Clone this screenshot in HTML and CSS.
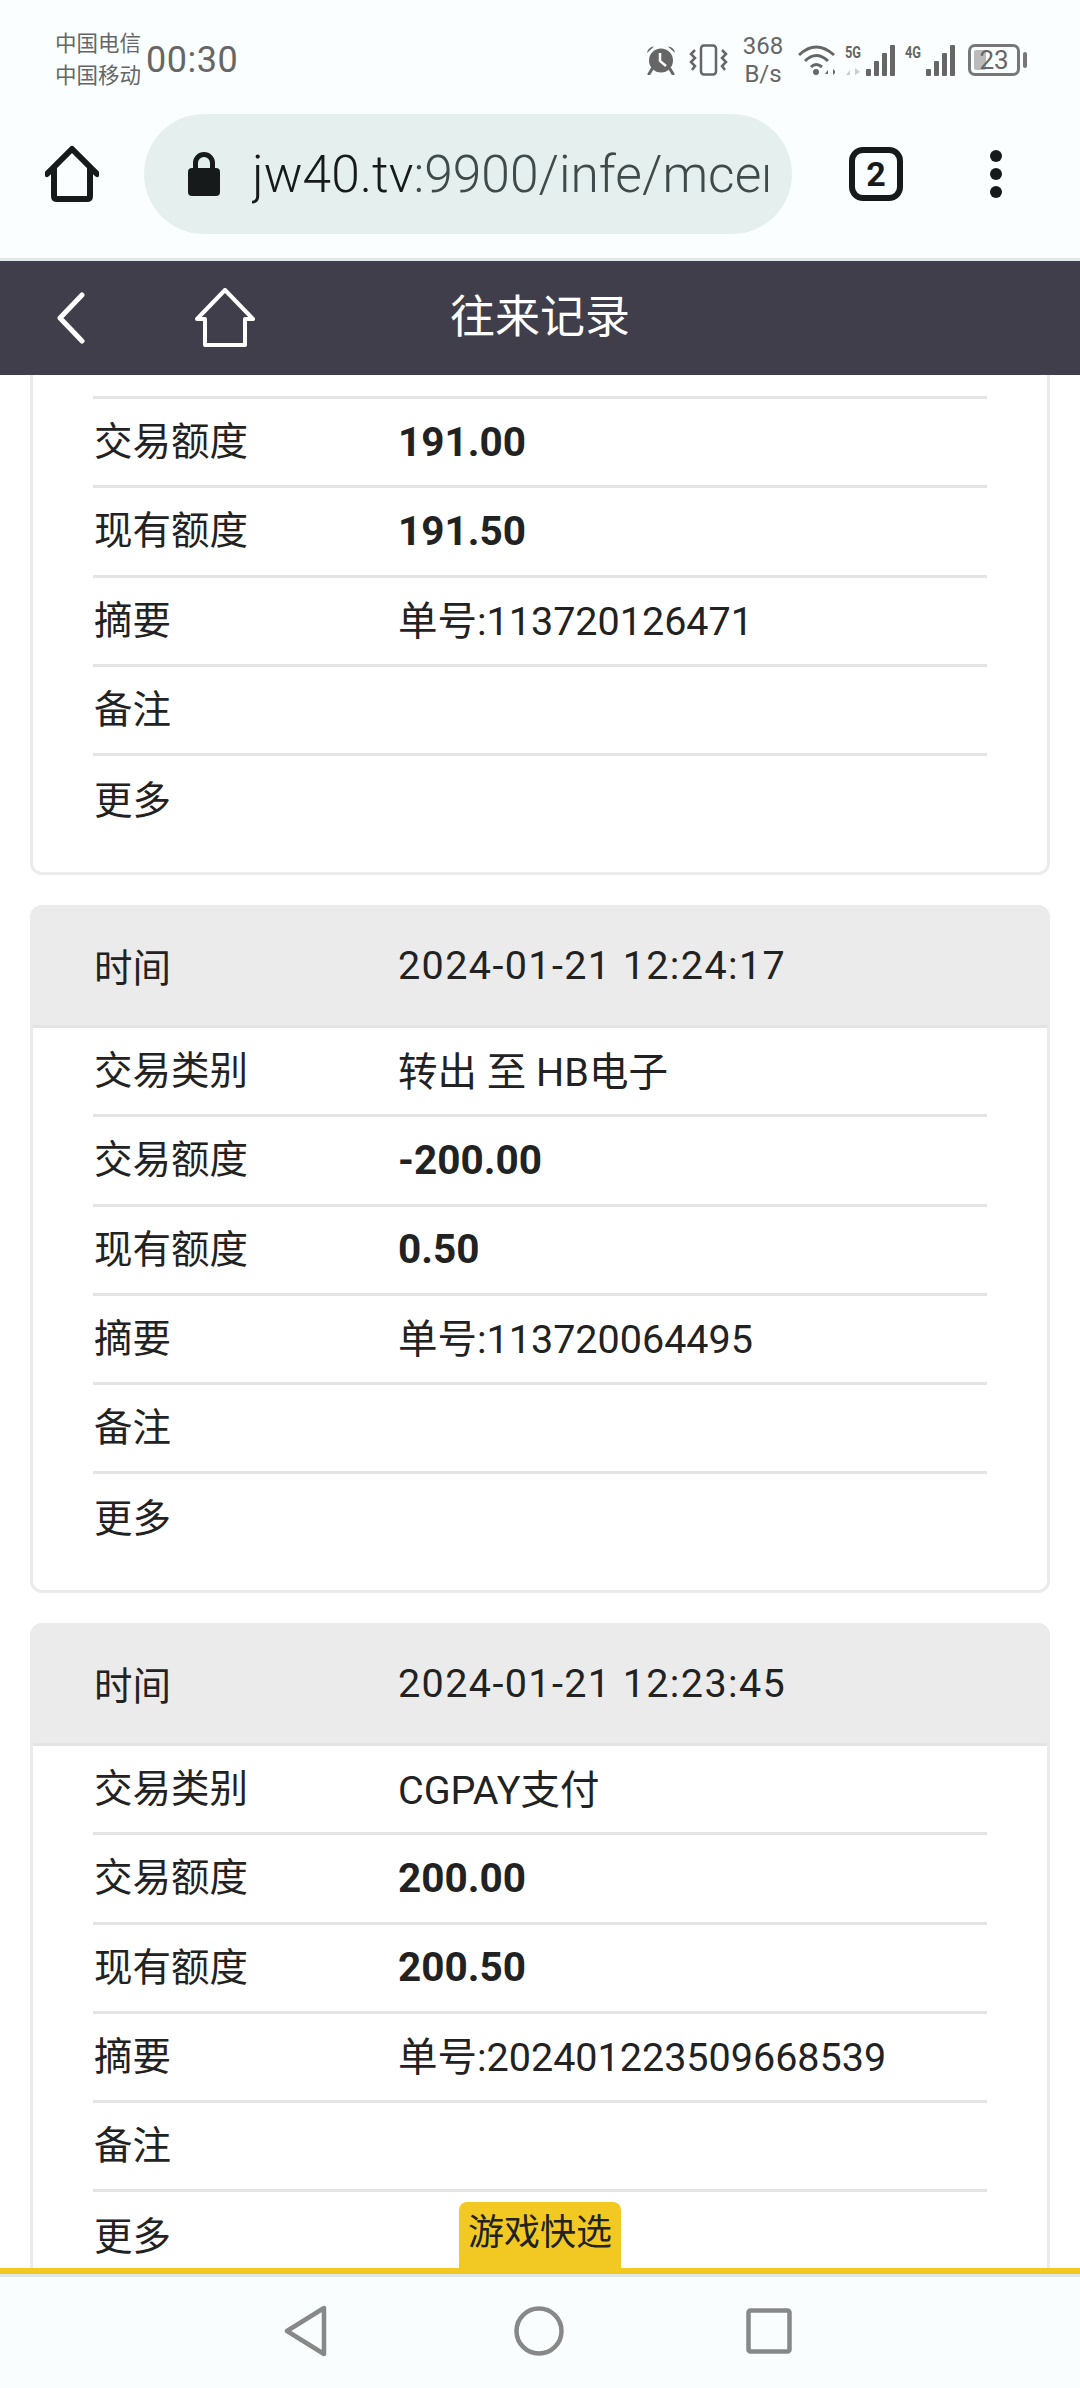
FILE: index.html
```html
<!DOCTYPE html>
<html lang="zh-CN">
<head>
    <meta charset="UTF-8">
    <meta name="viewport" content="width=device-width, initial-scale=1.0">
    <title>往来记录</title>
    <link rel="stylesheet" href="styles.css">
</head>
<body>

<div class="screen">
    <div class="statusBar">
        <div class="carriers"><span>中国电信</span><span>中国移动</span></div>
        <div class="clock">00:30</div>
        <div class="statusIcons">
            <svg class="iconAlarm" width="30" height="30" viewBox="0 0 30 30">
                <circle cx="15" cy="15.5" r="12" fill="#666"/>
                <path d="M1 8 Q2 2 8 1.5 Z M29 8 Q28 2 22 1.5 Z" fill="#666"/>
                <path d="M6 24 L3 29 M24 24 L27 29" stroke="#666" stroke-width="3" stroke-linecap="round"/>
                <path d="M14 8 V16 L20 21" fill="none" stroke="#fafefe" stroke-width="2.5"/>
            </svg>
            <svg class="iconVibrate" width="39" height="32" viewBox="0 0 39 32">
                <rect x="12" y="1.5" width="15" height="29" rx="3" fill="none" stroke="#666" stroke-width="2.5"/>
                <path d="M6 6 L2 10 L6 14 L2 18 L6 22 L3 26 M33 6 L37 10 L33 14 L37 18 L33 22 L36 26" fill="none" stroke="#666" stroke-width="2.5"/>
            </svg>
            <div class="netSpeed"><span>368</span><span>B/s</span></div>
            <svg class="iconWifi" width="37" height="32" viewBox="0 0 37 32">
                <path d="M1 11 Q18 -5 36 11 M7 17 Q18 6 30 17 M13 23 Q18 18 24 23" fill="none" stroke="#666" stroke-width="3"/>
                <circle cx="18" cy="28" r="3" fill="#666"/>
                <path d="M27 30 L30 26 V30 Z M33 24 V31 M35 25 L38 28 L35 31 Z" fill="#666"/>
            </svg>
            <div class="signal">
                <div class="signalTag">
                    <span class="netType">5G</span>
                    <svg width="16" height="10" viewBox="0 0 16 10"><path d="M1 9 L5 4 V9 Z M8 1 V10 M10 2 L15 6 L10 9 Z" fill="#ccc"/></svg>
                </div>
                <div class="bars"><i class="b1"></i><i class="b2"></i><i class="b3"></i><i class="b4"></i></div>
            </div>
            <div class="signal">
                <div class="signalTag"><span class="netType">4G</span></div>
                <div class="bars"><i class="b1"></i><i class="b2"></i><i class="b3"></i><i class="b4"></i></div>
            </div>
            <div class="battery">
                <div class="batteryBody"><div class="batteryFill"></div><span>23</span></div>
                <div class="batteryCap"></div>
            </div>
        </div>
    </div>

    <div class="toolbar">
        <svg class="toolHome" width="54" height="56" viewBox="0 0 54 56">
            <path d="M2 28 L27 3 L52 28 M9 23 V50 Q9 53 12 53 H42 Q45 53 45 50 V23" fill="none" stroke="#161a1a" stroke-width="6" stroke-linecap="round" stroke-linejoin="round"/>
        </svg>
        <div class="urlPill">
            <svg class="lock" width="32" height="44" viewBox="0 0 32 44">
                <path d="M7.5 20 V11 A8.5 8.5 0 0 1 24.5 11 V20" fill="none" stroke="#161a1a" stroke-width="5"/>
                <rect x="0" y="16" width="32" height="28" rx="4" fill="#161a1a"/>
            </svg>
            <div class="url"><span class="urlHost">jw40.tv</span>:9900/infe/mcer</div>
        </div>
        <div class="tabCount">2</div>
        <div class="dots"><i></i><i></i><i></i></div>
    </div>

    <div class="titleBar">
        <svg class="titleBack" width="28" height="52" viewBox="0 0 28 52">
            <path d="M25 3 L3 26 L25 49" fill="none" stroke="#fff" stroke-width="5" stroke-linecap="round" stroke-linejoin="round"/>
        </svg>
        <svg class="titleHome" width="60" height="60" viewBox="0 0 60 60">
            <path d="M2 31 L30 2 L58 31 H50 V57 H10 V31 Z" fill="none" stroke="#fff" stroke-width="4" stroke-linejoin="round"/>
        </svg>
        <div class="titleText">往来记录</div>
    </div>

    <div class="records">
        <div class="card cardCut">
            <div class="row rowCut"></div>
            <div class="row"><div class="label">交易额度</div><div class="value strong">191.00</div></div>
            <div class="row"><div class="label">现有额度</div><div class="value strong">191.50</div></div>
            <div class="row"><div class="label">摘要</div><div class="value">单号:113720126471</div></div>
            <div class="row"><div class="label">备注</div><div class="value"></div></div>
            <div class="row"><div class="label">更多</div><div class="value"></div></div>
        </div>

        <div class="card">
            <div class="cardHead"><div class="label">时间</div><div class="value date">2024-01-21 12:24:17</div></div>
            <div class="row"><div class="label">交易类别</div><div class="value">转出 至 HB电子</div></div>
            <div class="row"><div class="label">交易额度</div><div class="value strong">-200.00</div></div>
            <div class="row"><div class="label">现有额度</div><div class="value strong">0.50</div></div>
            <div class="row"><div class="label">摘要</div><div class="value">单号:113720064495</div></div>
            <div class="row"><div class="label">备注</div><div class="value"></div></div>
            <div class="row"><div class="label">更多</div><div class="value"></div></div>
        </div>

        <div class="card">
            <div class="cardHead"><div class="label">时间</div><div class="value date">2024-01-21 12:23:45</div></div>
            <div class="row"><div class="label">交易类别</div><div class="value">CGPAY支付</div></div>
            <div class="row"><div class="label">交易额度</div><div class="value strong">200.00</div></div>
            <div class="row"><div class="label">现有额度</div><div class="value strong">200.50</div></div>
            <div class="row"><div class="label">摘要</div><div class="value">单号:202401223509668539</div></div>
            <div class="row"><div class="label">备注</div><div class="value"></div></div>
            <div class="row"><div class="label">更多</div><div class="value"></div></div>
        </div>
    </div>

    <div class="footer">
        <div class="quickTab">游戏快选</div>
        <div class="navBar">
            <svg width="44" height="52" viewBox="0 0 44 52">
                <path d="M40 3 V49 L3 26 Z" fill="none" stroke="#888" stroke-width="4.5" stroke-linejoin="round"/>
            </svg>
            <svg width="50" height="50" viewBox="0 0 50 50">
                <circle cx="25" cy="25" r="22.5" fill="none" stroke="#888" stroke-width="4.5"/>
            </svg>
            <svg class="navSquare" width="46" height="46" viewBox="0 0 46 46">
                <rect x="2.5" y="2.5" width="41" height="41" rx="2" fill="none" stroke="#888" stroke-width="4.5"/>
            </svg>
        </div>
    </div>
</div>

</body>
</html>
```

FILE: styles.css
```css
* {
    box-sizing: border-box;
}
body {
    margin: 0;
    font-family: Roboto, "Noto Sans CJK SC", sans-serif;
    background: #fff;
    color: #222;
}
.screen {
    width: 1080px;
    height: 2388px;
    display: flex;
    flex-direction: column;
    overflow: hidden;
}

/* status bar */
.statusBar {
    height: 90px;
    flex: none;
    display: flex;
    align-items: center;
    padding: 30px 53px 0 55px;
    background: #fafefe;
    color: #666;
}
.carriers {
    display: flex;
    flex-direction: column;
    font-size: 21.5px;
    line-height: 32px;
}
.clock {
    margin-left: 5px;
    font-size: 36px;
    letter-spacing: 0.5px;
}
.statusIcons {
    margin-left: auto;
    display: flex;
    align-items: center;
}
.iconVibrate {
    margin-left: 13px;
}
.netSpeed {
    margin-left: 15px;
    width: 40px;
    display: flex;
    flex-direction: column;
    align-items: center;
    font-size: 24px;
    line-height: 28px;
    white-space: nowrap;
}
.iconWifi {
    margin-left: 15px;
}
.signal {
    margin-left: 10px;
    display: flex;
    align-items: flex-end;
    height: 32px;
}
.signalTag {
    display: flex;
    flex-direction: column;
    align-self: flex-start;
    width: 20px;
}
.netType {
    font-size: 16px;
    line-height: 18px;
    font-weight: 700;
    transform: scaleX(0.8);
    transform-origin: left;
}
.signalTag svg {
    margin-top: 4px;
}
.bars {
    display: flex;
    align-items: flex-end;
    gap: 3px;
    margin-left: 1px;
    height: 31px;
}
.bars i {
    display: block;
    width: 5px;
    background: #666;
    border-radius: 1px;
}
.b1 { height: 7px; }
.b2 { height: 15px; }
.b3 { height: 23px; }
.b4 { height: 31px; }
.battery {
    margin-left: 13px;
    display: flex;
    align-items: center;
}
.batteryBody {
    position: relative;
    width: 52px;
    height: 32px;
    border: 3px solid #777;
    border-radius: 7px;
    font-size: 26px;
    line-height: 26px;
    text-align: center;
}
.batteryFill {
    position: absolute;
    left: 3px;
    top: 3px;
    bottom: 3px;
    width: 12px;
    background: #bbb;
    border-radius: 2px;
}
.battery span {
    position: relative;
}
.batteryCap {
    width: 4px;
    height: 16px;
    margin-left: 3px;
    background: #777;
    border-radius: 2px;
}

/* browser toolbar */
.toolbar {
    height: 171px;
    flex: none;
    display: flex;
    align-items: center;
    padding-left: 45px;
    background: #fafefe;
    border-bottom: 3px solid #dfe7e7;
}
.urlPill {
    margin-left: 45px;
    width: 648px;
    height: 120px;
    flex: none;
    display: flex;
    align-items: center;
    padding: 0 24px 0 44px;
    background: #e5f0ee;
    border-radius: 60px;
}
.lock {
    flex: none;
}
.url {
    margin-left: 32px;
    overflow: hidden;
    white-space: nowrap;
    font-size: 51.5px;
    font-weight: 300;
    color: #3f4b4b;
}
.urlHost {
    color: #161a1a;
}
.tabCount {
    margin-left: 57px;
    width: 54px;
    height: 54px;
    flex: none;
    border: 6px solid #161a1a;
    border-radius: 14px;
    font-size: 34px;
    font-weight: 700;
    line-height: 42px;
    text-align: center;
    color: #161a1a;
}
.dots {
    margin-left: 87px;
    display: flex;
    flex-direction: column;
    gap: 6px;
}
.dots i {
    display: block;
    width: 12px;
    height: 12px;
    border-radius: 50%;
    background: #161a1a;
}

/* page title */
.titleBar {
    position: relative;
    height: 114px;
    flex: none;
    display: flex;
    align-items: center;
    padding-left: 57px;
    background: #3f3e4a;
}
.titleHome {
    margin-left: 110px;
}
.titleText {
    position: absolute;
    left: 0;
    right: 0;
    padding-bottom: 9px;
    text-align: center;
    font-size: 45px;
    color: #fff;
}

/* records */
.records {
    flex: 1;
    overflow: hidden;
    padding: 0 30px;
}
.card {
    height: 688px;
    margin-bottom: 30px;
    border: 3px solid #ebebeb;
    border-radius: 12px;
    background: #fff;
}
.cardCut {
    height: 500px;
    border-top: none;
    border-top-left-radius: 0;
    border-top-right-radius: 0;
}
.cardHead {
    height: 123px;
    display: flex;
    align-items: center;
    padding: 0 60px;
    margin-top: -3px;
    background: #ebebeb;
    border-bottom: 3px solid #e4e4e4;
    border-radius: 9px 9px 0 0;
}
.row {
    height: 89.25px;
    display: flex;
    align-items: center;
    margin: 0 60px;
    border-bottom: 3px solid #e4e4e4;
}
.rowCut {
    height: 24px;
}
.row:last-child {
    border-bottom: none;
}
.label {
    width: 305px;
    flex: none;
    padding-left: 1px;
    font-size: 38.5px;
}
.row .label {
    padding-bottom: 8px;
}
.value {
    font-size: 39.5px;
    white-space: nowrap;
}
.row .value {
    padding-bottom: 6px;
}
.date {
    letter-spacing: 1.4px;
}
.row .strong {
    padding-bottom: 1px;
    font-size: 40.5px;
    font-weight: 700;
}

/* bottom */
.footer {
    position: relative;
    flex: none;
    border-top: 6px solid #f2c922;
}
.quickTab {
    position: absolute;
    left: 459px;
    bottom: 100%;
    width: 162px;
    height: 72px;
    background: #f2c922;
    border-radius: 8px 8px 0 0;
    font-size: 36px;
    line-height: 62px;
    text-align: center;
    color: #222;
}
.navBar {
    height: 114px;
    display: flex;
    align-items: center;
    justify-content: center;
    gap: 186px;
    padding: 0 4px 4px 0;
    background: #f9fdfd;
    border-top: 3px solid #dfe7e7;
}
.navSquare {
    margin-left: -4px;
}
```
